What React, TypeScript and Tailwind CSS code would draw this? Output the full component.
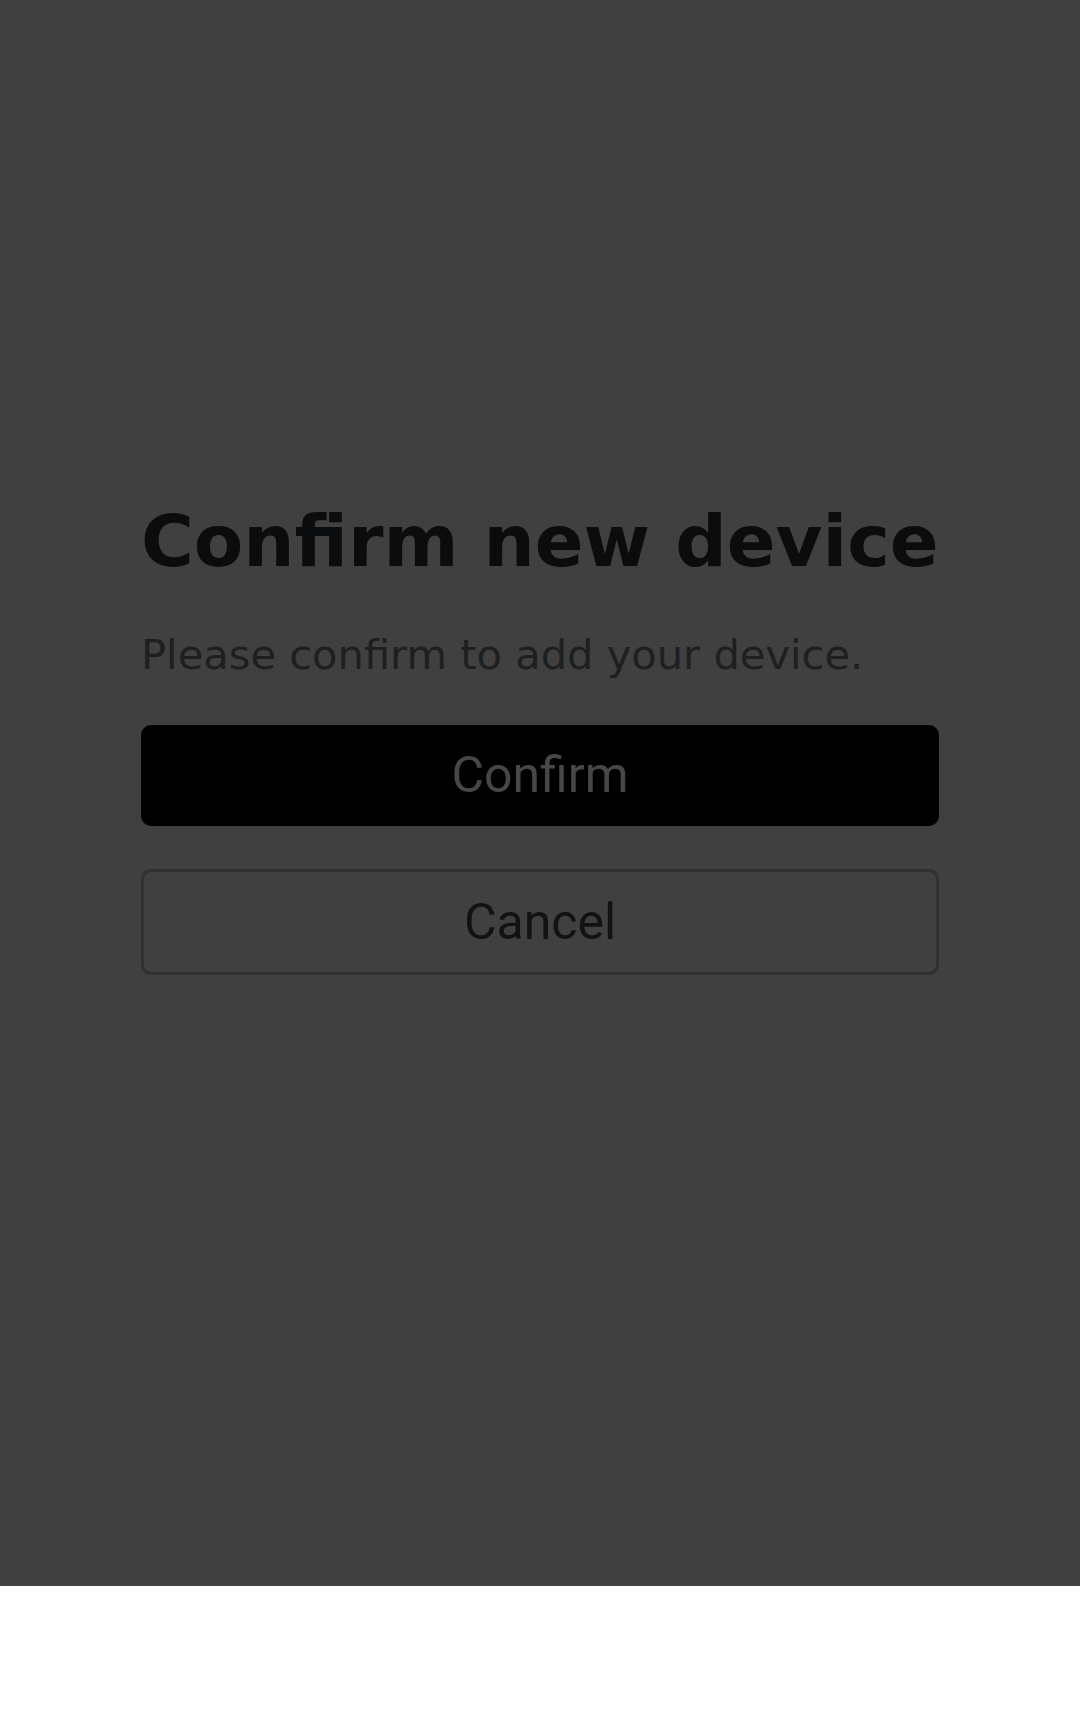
import React from "react";

export default function App() {
  return (
    <div className="w-[1080px] h-[1731px] bg-white">
      {/* Dimmed screen */}
      <div className="h-[1586px] bg-[#404040] flex flex-col px-[141px] pt-[505px]">
        <h1 className="font-['DejaVu_Sans',sans-serif] font-bold text-[72px] leading-none text-[#0b0c0e] whitespace-nowrap">
          Confirm new device
        </h1>
        <p className="mt-[57px] font-['DejaVu_Sans',sans-serif] text-[41.6px] leading-none text-[#1e1f21] whitespace-nowrap">
          Please confirm to add your device.
        </p>

        {/* Actions */}
        <button className="mt-[49px] h-[101px] w-full rounded-[10px] bg-black flex items-center justify-center font-['Roboto',sans-serif] text-[50px] leading-none text-[#474747]">
          Confirm
        </button>
        <button className="mt-[43px] h-[106px] w-full rounded-[10px] border-[3px] border-[#303030] flex items-center justify-center font-['Roboto',sans-serif] text-[50px] leading-none text-[#121212]">
          Cancel
        </button>
      </div>
    </div>
  );
}
